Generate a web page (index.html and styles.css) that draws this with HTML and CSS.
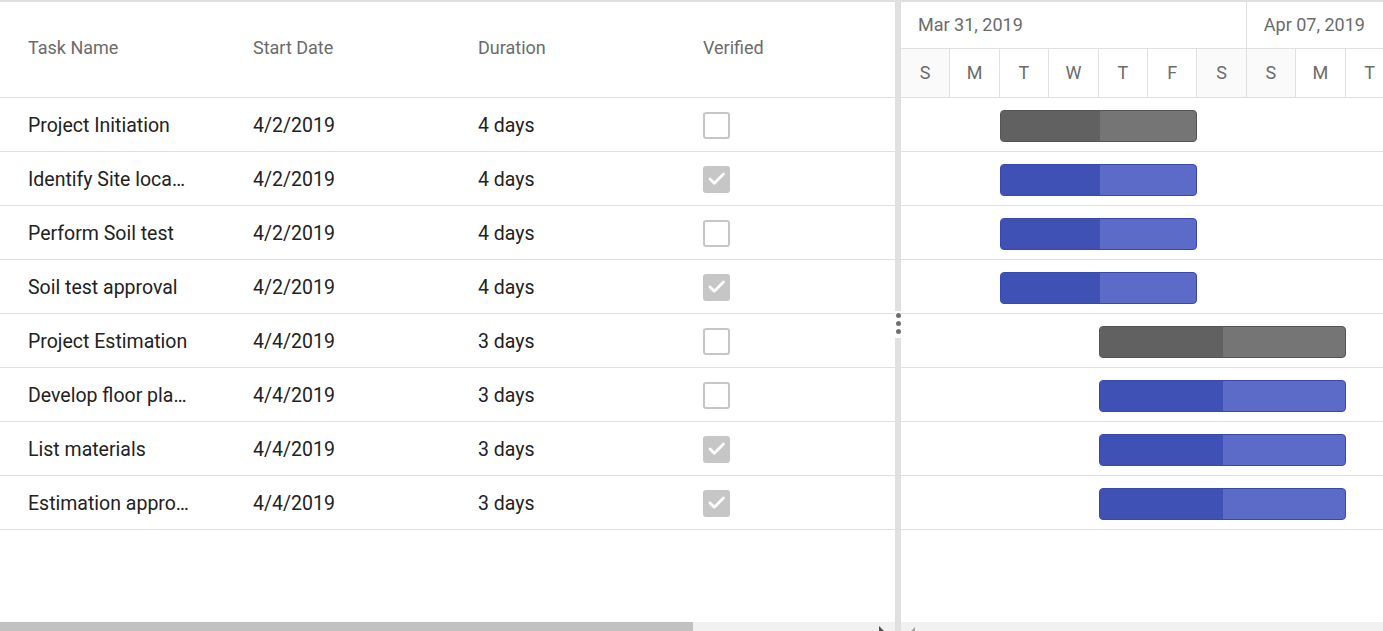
FILE: index.html
```html
<!DOCTYPE html>
<html>
<head>
<meta charset="utf-8">
<link rel="stylesheet" href="styles.css">
</head>
<body>
<div class="gantt">
  <div class="grid-pane">
    <div class="grid-header">
      <div class="hcell">Task Name</div>
      <div class="hcell">Start Date</div>
      <div class="hcell">Duration</div>
      <div class="hcell">Verified</div>
    </div>
    <div class="grid-row">
      <div class="cell"><span class="ellip">Project Initiation</span></div>
      <div class="cell">4/2/2019</div>
      <div class="cell">4 days</div>
      <div class="cell"><span class="cb"></span></div>
    </div>
    <div class="grid-row">
      <div class="cell"><span class="ellip">Identify Site location</span></div>
      <div class="cell">4/2/2019</div>
      <div class="cell">4 days</div>
      <div class="cell"><span class="cb checked"><svg viewBox="0 0 23 23" width="23" height="23"><path d="M5 11l4.3 4.3L18.5 6" fill="none" stroke="#fff" stroke-width="2.8" stroke-linecap="round" stroke-linejoin="round"/></svg></span></div>
    </div>
    <div class="grid-row">
      <div class="cell"><span class="ellip">Perform Soil test</span></div>
      <div class="cell">4/2/2019</div>
      <div class="cell">4 days</div>
      <div class="cell"><span class="cb"></span></div>
    </div>
    <div class="grid-row">
      <div class="cell"><span class="ellip">Soil test approval</span></div>
      <div class="cell">4/2/2019</div>
      <div class="cell">4 days</div>
      <div class="cell"><span class="cb checked"><svg viewBox="0 0 23 23" width="23" height="23"><path d="M5 11l4.3 4.3L18.5 6" fill="none" stroke="#fff" stroke-width="2.8" stroke-linecap="round" stroke-linejoin="round"/></svg></span></div>
    </div>
    <div class="grid-row">
      <div class="cell"><span class="ellip">Project Estimation</span></div>
      <div class="cell">4/4/2019</div>
      <div class="cell">3 days</div>
      <div class="cell"><span class="cb"></span></div>
    </div>
    <div class="grid-row">
      <div class="cell"><span class="ellip">Develop floor plan for estimation</span></div>
      <div class="cell">4/4/2019</div>
      <div class="cell">3 days</div>
      <div class="cell"><span class="cb"></span></div>
    </div>
    <div class="grid-row">
      <div class="cell"><span class="ellip">List materials</span></div>
      <div class="cell">4/4/2019</div>
      <div class="cell">3 days</div>
      <div class="cell"><span class="cb checked"><svg viewBox="0 0 23 23" width="23" height="23"><path d="M5 11l4.3 4.3L18.5 6" fill="none" stroke="#fff" stroke-width="2.8" stroke-linecap="round" stroke-linejoin="round"/></svg></span></div>
    </div>
    <div class="grid-row">
      <div class="cell"><span class="ellip">Estimation approval</span></div>
      <div class="cell">4/4/2019</div>
      <div class="cell">3 days</div>
      <div class="cell"><span class="cb checked"><svg viewBox="0 0 23 23" width="23" height="23"><path d="M5 11l4.3 4.3L18.5 6" fill="none" stroke="#fff" stroke-width="2.8" stroke-linecap="round" stroke-linejoin="round"/></svg></span></div>
    </div>
    <div class="filler"></div>
    <div class="hscroll">
      <div class="thumb"></div>
      <div class="track"><span class="arrow-right"></span></div>
    </div>
  </div>

  <div class="splitter">
    <div class="handle"><span class="dot"></span><span class="dot"></span><span class="dot"></span></div>
  </div>

  <div class="chart-pane">
    <div class="timeline">
      <div class="tl-top">
        <div class="week">Mar 31, 2019</div>
        <div class="week">Apr 07, 2019</div>
      </div>
      <div class="tl-days">
        <div class="day weekend">S</div>
        <div class="day">M</div>
        <div class="day">T</div>
        <div class="day">W</div>
        <div class="day">T</div>
        <div class="day">F</div>
        <div class="day weekend">S</div>
        <div class="day weekend">S</div>
        <div class="day">M</div>
        <div class="day">T</div>
        <div class="day">W</div>
      </div>
    </div>
    <div class="chart-row"><div class="bar parent" style="margin-left:98.8px;width:197.6px"><div class="progress" style="width:50.5%"></div></div></div>
    <div class="chart-row"><div class="bar" style="margin-left:98.8px;width:197.6px"><div class="progress" style="width:50.5%"></div></div></div>
    <div class="chart-row"><div class="bar" style="margin-left:98.8px;width:197.6px"><div class="progress" style="width:50.5%"></div></div></div>
    <div class="chart-row"><div class="bar" style="margin-left:98.8px;width:197.6px"><div class="progress" style="width:50.5%"></div></div></div>
    <div class="chart-row"><div class="bar parent" style="margin-left:197.6px;width:247px"><div class="progress" style="width:50.5%"></div></div></div>
    <div class="chart-row"><div class="bar" style="margin-left:197.6px;width:247px"><div class="progress" style="width:50.5%"></div></div></div>
    <div class="chart-row"><div class="bar" style="margin-left:197.6px;width:247px"><div class="progress" style="width:50.5%"></div></div></div>
    <div class="chart-row"><div class="bar" style="margin-left:197.6px;width:247px"><div class="progress" style="width:50.5%"></div></div></div>
    <div class="filler"></div>
    <div class="hscroll">
      <div class="track"><span class="arrow-left"></span></div>
    </div>
  </div>
</div>
</body>
</html>
```

FILE: styles.css
```css
* { box-sizing: border-box; }
html, body { margin: 0; padding: 0; background: #fff; }
body {
  font-family: Roboto, "Liberation Sans", Arial, sans-serif;
  color: #212121;
  overflow: hidden;
}
.gantt {
  display: flex;
  width: 1383px;
  height: 631px;
  border-top: 2px solid #e0e0e0;
}
.grid-pane {
  width: 895px;
  flex: none;
  display: flex;
  flex-direction: column;
  overflow: hidden;
}
.grid-header {
  display: grid;
  grid-template-columns: 225px 225px 225px 225px;
  height: 96px;
  border-bottom: 1px solid #e0e0e0;
}
.hcell {
  display: flex;
  align-items: center;
  padding: 0 0 4px 28px;
  font-size: 18px;
  font-weight: 400;
  color: #6b6b6b;
}
.grid-row {
  display: grid;
  grid-template-columns: 225px 225px 225px 225px;
  height: 54px;
  border-bottom: 1px solid #e0e0e0;
}
.cell {
  display: flex;
  align-items: center;
  padding: 1px 34px 0 28px;
  font-size: 19.5px;
  color: #222;
  min-width: 0;
}
.ellip {
  display: block;
  white-space: nowrap;
  overflow: hidden;
  text-overflow: ellipsis;
  min-width: 0;
}
.cb {
  width: 27px;
  height: 27px;
  border: 2px solid #c6c6c6;
  border-radius: 3px;
  display: flex;
  align-items: center;
  justify-content: center;
  margin-top: 1px;
}
.cb svg { display: block; }
.cb.checked {
  background: #c6c6c6;
}
.filler { flex: 1; }
.hscroll {
  height: 9px;
  display: flex;
  flex: none;
}
.thumb {
  width: 693px;
  background: #c1c1c1;
}
.track {
  flex: 1;
  background: #f1f1f1;
  position: relative;
}
.arrow-right {
  position: absolute;
  left: 186px;
  top: 4px;
  width: 0; height: 0;
  border-left: 5px solid #505050;
  border-top: 5px solid transparent;
}
.arrow-left {
  position: absolute;
  left: 10px;
  top: 5px;
  width: 0; height: 0;
  border-right: 4px solid #a3a3a3;
  border-top: 4px solid transparent;
}
.splitter {
  width: 6px;
  flex: none;
  background: #e0e0e0;
  display: flex;
  flex-direction: column;
  padding-top: 309px;
}
.handle {
  height: 27px;
  background: #fff;
  display: flex;
  flex-direction: column;
  align-items: center;
  padding-top: 2px;
  gap: 3px;
}
.dot {
  width: 5px;
  height: 5px;
  border-radius: 50%;
  background: #6f6f6f;
}
.chart-pane {
  flex: 1;
  min-width: 0;
  display: flex;
  flex-direction: column;
  overflow: hidden;
}
.timeline {
  height: 96px;
  border-bottom: 1px solid #e0e0e0;
  display: flex;
  flex-direction: column;
}
.tl-top {
  height: 47px;
  border-bottom: 1px solid #e0e0e0;
  display: flex;
}
.week {
  width: 345.8px;
  flex: none;
  border-right: 1px solid #e0e0e0;
  display: flex;
  align-items: center;
  padding: 0 0 2px 17px;
  font-size: 18px;
  color: #6b6b6b;
}
.tl-days {
  flex: 1;
  display: flex;
}
.day {
  width: 49.4px;
  flex: none;
  border-right: 1px solid #e0e0e0;
  display: flex;
  align-items: center;
  justify-content: center;
  padding-bottom: 1px;
  font-size: 18px;
  color: #6b6b6b;
}
.day.weekend { background: #fafafa; }
.chart-row {
  height: 54px;
  border-bottom: 1px solid #e0e0e0;
  display: flex;
  align-items: center;
  padding-top: 3px;
}
.bar {
  flex: none;
  height: 32px;
  border-radius: 4px;
  border: 1px solid #3949ab;
  background: #5c6bc8;
  overflow: hidden;
}
.bar .progress {
  height: 100%;
  background: #3f51b5;
}
.bar.parent {
  border-color: #555;
  background: #757575;
}
.bar.parent .progress {
  background: #616161;
}
```
